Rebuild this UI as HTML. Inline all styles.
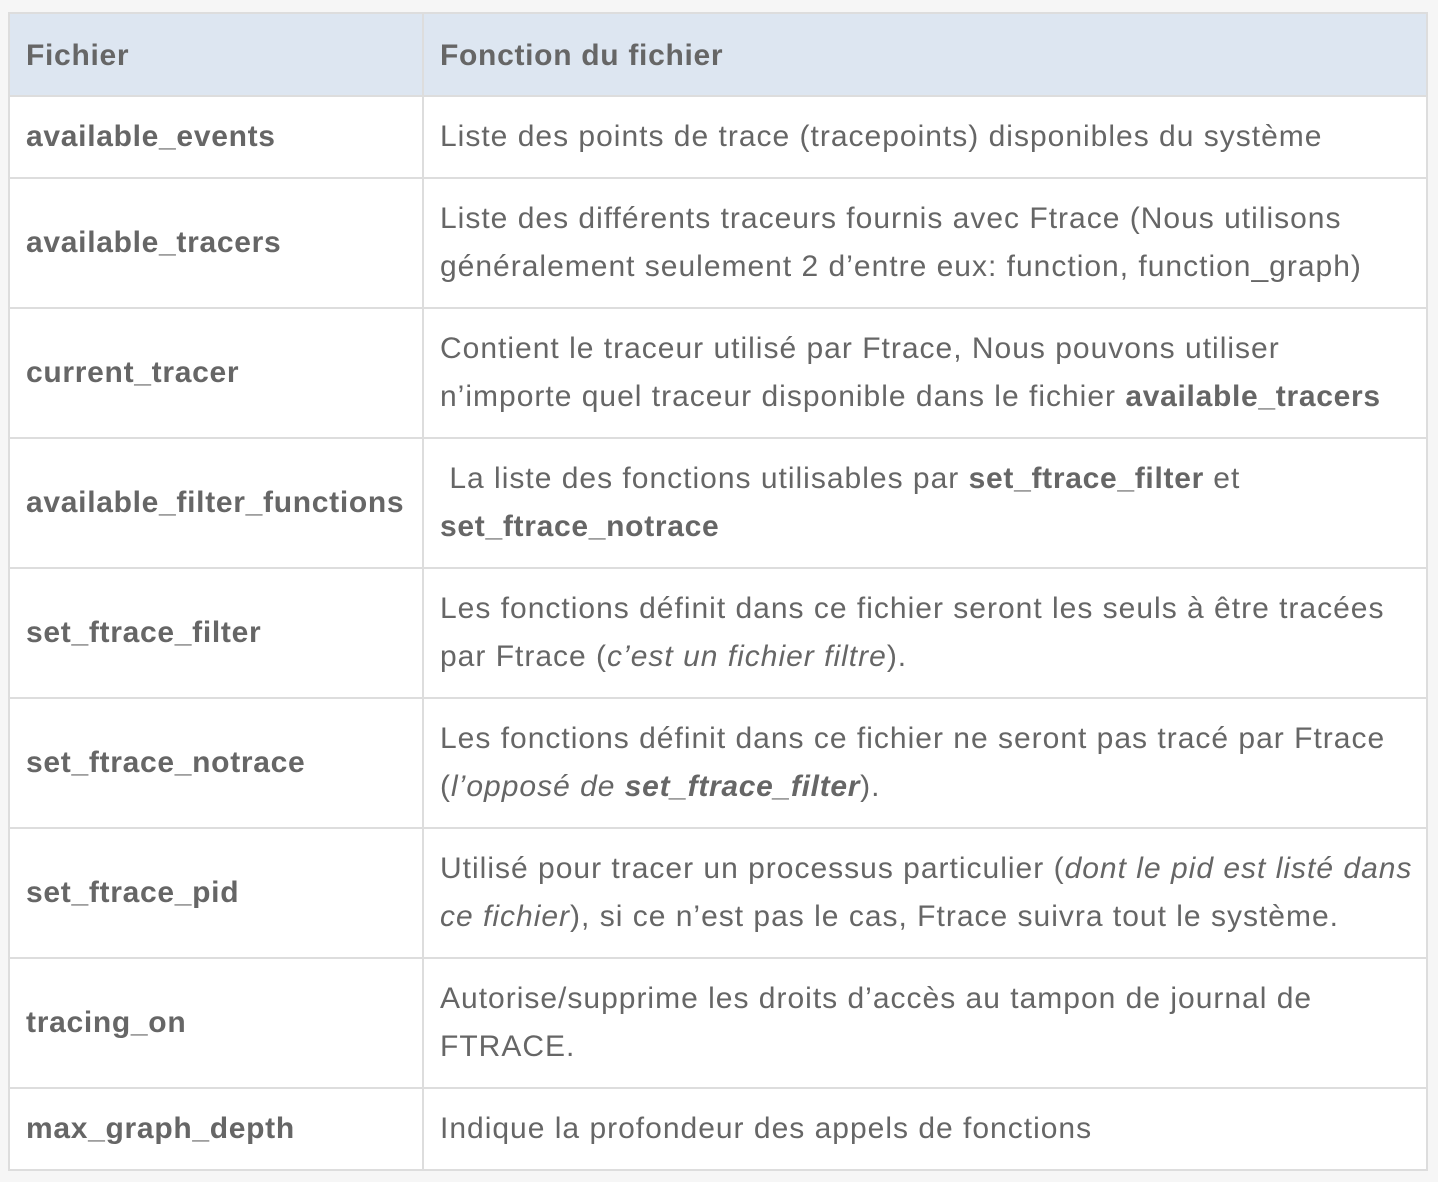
<!DOCTYPE html>
<html><head><meta charset="utf-8"><style>
html,body{margin:0;padding:0;background:#f6f6f6;width:1438px;height:1182px;overflow:hidden}
body{font-family:"Liberation Sans",Arial,sans-serif;color:#666;font-size:30px;letter-spacing:1px}
b,.a{letter-spacing:0.7px}
.t{position:absolute;left:8px;top:12px;width:1420px;height:1159px;background:#fff;box-sizing:border-box;border:2px solid #ddd}
.h{position:absolute;left:0;top:0;width:1416px;height:82px;background:#dde6f1}
.hl{position:absolute;left:0;width:1416px;height:2px;background:#ddd}
.vl{position:absolute;left:412px;top:0;width:2px;height:1155px;background:#ddd}
.c{position:absolute;display:flex;align-items:center;line-height:48px;white-space:nowrap}
.a{left:16px;width:390px;font-weight:bold}
.b{left:430px;width:985px}
</style></head><body>
<div class="t">
<div class="h"></div>
<div class="hl" style="top:81px"></div>
<div class="hl" style="top:163px"></div>
<div class="hl" style="top:293px"></div>
<div class="hl" style="top:423px"></div>
<div class="hl" style="top:553px"></div>
<div class="hl" style="top:683px"></div>
<div class="hl" style="top:813px"></div>
<div class="hl" style="top:943px"></div>
<div class="hl" style="top:1073px"></div>
<div class="vl"></div>

<div class="c a" style="top:1px;height:82px">Fichier</div>
<div class="c b" style="top:1px;height:82px"><b>Fonction du fichier</b></div>

<div class="c a" style="top:83px;height:80px">available_events</div>
<div class="c b" style="top:83px;height:80px">Liste des points de trace (tracepoints) disponibles du système</div>

<div class="c a" style="top:165px;height:128px">available_tracers</div>
<div class="c b" style="top:165px;height:128px"><div>Liste des différents traceurs fournis avec Ftrace (Nous utilisons<br>généralement seulement 2 d’entre eux: function, function_graph)</div></div>

<div class="c a" style="top:295px;height:128px">current_tracer</div>
<div class="c b" style="top:295px;height:128px"><div>Contient le traceur utilisé par Ftrace, Nous pouvons utiliser<br>n’importe quel traceur disponible dans le fichier <b>available_tracers</b></div></div>

<div class="c a" style="top:425px;height:128px">available_filter_functions</div>
<div class="c b" style="top:425px;height:128px"><div>&nbsp;La liste des fonctions utilisables par <b>set_ftrace_filter</b> et<br><b>set_ftrace_notrace</b></div></div>

<div class="c a" style="top:555px;height:128px">set_ftrace_filter</div>
<div class="c b" style="top:555px;height:128px"><div>Les fonctions définit dans ce fichier seront les seuls à être tracées<br>par Ftrace (<i>c’est un fichier filtre</i>).</div></div>

<div class="c a" style="top:685px;height:128px">set_ftrace_notrace</div>
<div class="c b" style="top:685px;height:128px"><div>Les fonctions définit dans ce fichier ne seront pas tracé par Ftrace<br>(<i>l’opposé de <b>set_ftrace_filter</b></i>).</div></div>

<div class="c a" style="top:815px;height:128px">set_ftrace_pid</div>
<div class="c b" style="top:815px;height:128px"><div>Utilisé pour tracer un processus particulier (<i>dont le pid est listé dans<br>ce fichier</i>), si ce n’est pas le cas, Ftrace suivra tout le système.</div></div>

<div class="c a" style="top:945px;height:128px">tracing_on</div>
<div class="c b" style="top:945px;height:128px"><div>Autorise/supprime les droits d’accès au tampon de journal de<br>FTRACE.</div></div>

<div class="c a" style="top:1075px;height:80px">max_graph_depth</div>
<div class="c b" style="top:1075px;height:80px">Indique la profondeur des appels de fonctions</div>
</div>
</body></html>
